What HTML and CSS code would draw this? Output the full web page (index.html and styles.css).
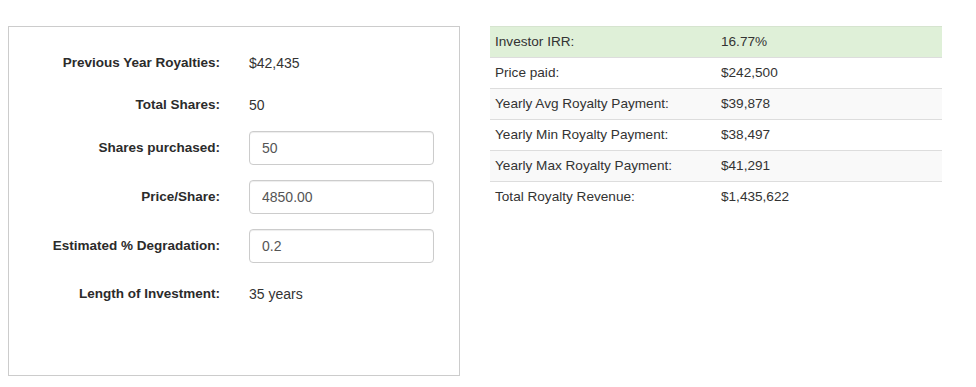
FILE: index.html
```
<!DOCTYPE html>
<html lang="en">
<head>
<meta charset="UTF-8">
<title>Royalty investment calculator</title>
<link rel="stylesheet" href="styles.css">
</head>
<body>

<div id="page">
	<form id="inputs">
		<div class="row static first">
			<label>Previous Year Royalties:</label>
			<span class="value">$42,435</span>
		</div>
		<div class="row static first">
			<label>Total Shares:</label>
			<span class="value">50</span>
		</div>
		<div class="row">
			<label for="shares">Shares purchased:</label>
			<input type="text" id="shares" value="50">
		</div>
		<div class="row">
			<label for="price">Price/Share:</label>
			<input type="text" id="price" value="4850.00">
		</div>
		<div class="row">
			<label for="degradation">Estimated % Degradation:</label>
			<input type="text" id="degradation" value="0.2">
		</div>
		<div class="row static">
			<label>Length of Investment:</label>
			<span class="value">35 years</span>
		</div>
	</form>

	<table id="results">
		<tr class="success">
			<td>Investor IRR:</td>
			<td>16.77%</td>
		</tr>
		<tr>
			<td>Price paid:</td>
			<td>$242,500</td>
		</tr>
		<tr>
			<td>Yearly Avg Royalty Payment:</td>
			<td>$39,878</td>
		</tr>
		<tr>
			<td>Yearly Min Royalty Payment:</td>
			<td>$38,497</td>
		</tr>
		<tr>
			<td>Yearly Max Royalty Payment:</td>
			<td>$41,291</td>
		</tr>
		<tr>
			<td>Total Royalty Revenue:</td>
			<td>$1,435,622</td>
		</tr>
	</table>
</div>

</body>
</html>
```

FILE: styles.css
```
html, body {
	padding: 0;
	border: 0;
	margin: 0;
	background: white;
	color: #333;
	font-family: "Liberation Sans", Arial, sans-serif;
	font-size: 14px;
}

#page {
	display: flex;
	align-items: flex-start;
	gap: 30px;
	padding: 26px 0 0 8px;
}

#inputs {
	box-sizing: border-box;
	width: 452px;
	height: 350px;
	border: 1px solid #ccc;
	padding-top: 20px;
	margin: 0;
}

#inputs .row {
	display: grid;
	grid-template-columns: 211px 185px;
	column-gap: 29px;
	align-items: center;
	height: 34px;
	margin-bottom: 15px;
}
#inputs .row.static {
	height: 32px;
}
#inputs .row.first {
	margin-bottom: 10px;
}
#inputs label {
	text-align: right;
	font-weight: bold;
	font-size: 13.5px;
	line-height: 20px;
	color: #2b2b2b;
}
#inputs .value {
	line-height: 20px;
}
#inputs input {
	box-sizing: border-box;
	width: 185px;
	height: 34px;
	padding: 6px 12px;
	border: 1px solid #ccc;
	border-radius: 4px;
	box-shadow: inset 0 1px 1px rgba(0, 0, 0, 0.075);
	font-family: inherit;
	font-size: 14px;
	color: #555;
	background: white;
	margin: 0;
}

#results {
	width: 452px;
	border-collapse: collapse;
	border-spacing: 0;
	font-size: 13.6px;
}
#results td {
	width: 50%;
	height: 30px;
	padding: 0 5px;
	border-top: 1px solid #ddd;
	line-height: 20px;
	vertical-align: middle;
}
#results tr:nth-child(odd) td {
	background: #f9f9f9;
}
#results tr.success td {
	background: #dff0d8;
	border-top-color: #d6e4cf;
}
```
